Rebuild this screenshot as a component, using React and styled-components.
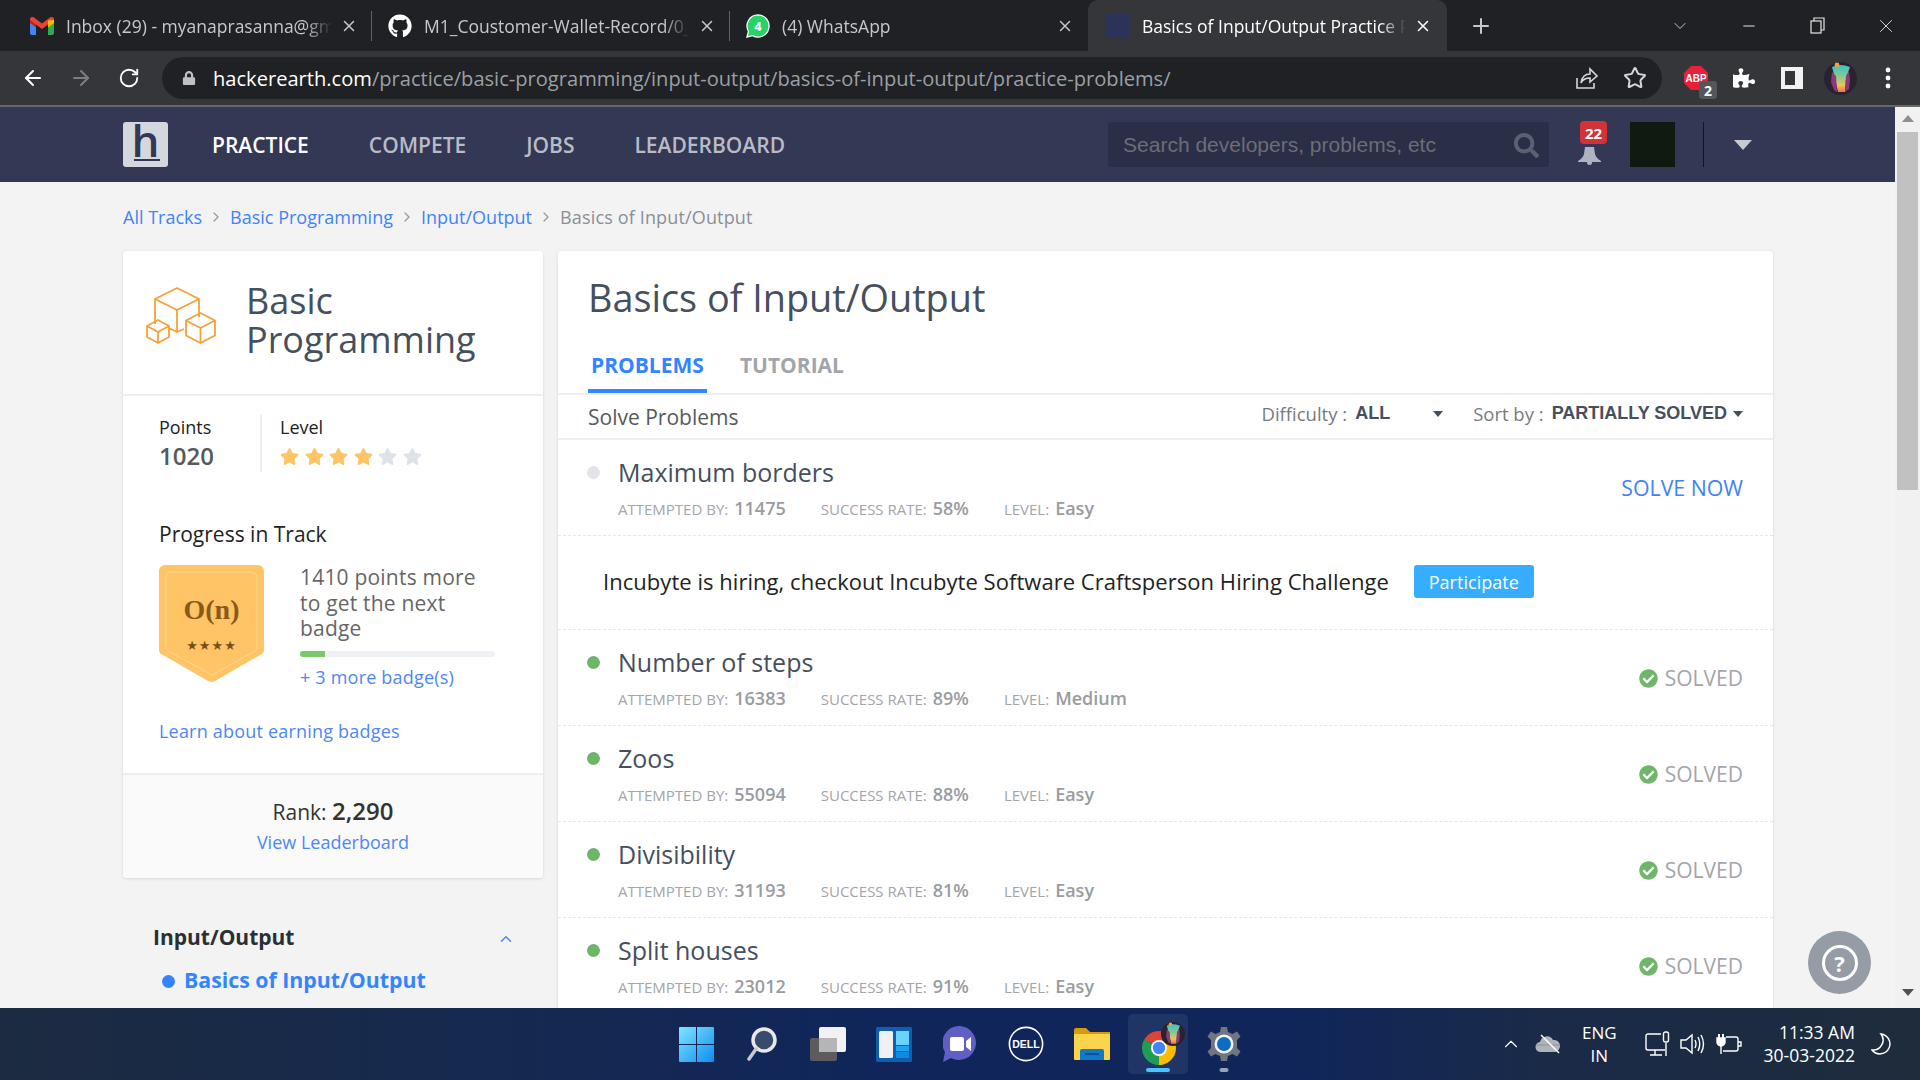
import React from 'react'
import styled, { createGlobalStyle } from 'styled-components'
import { FaGithub, FaSearch, FaStar, FaCheckCircle, FaPuzzlePiece, FaLock } from 'react-icons/fa'
import { ArrowLeft, ArrowRight, RotateCw, Star, X, Plus, ChevronDown, ChevronUp, ChevronRight, Minus } from 'lucide-react'

const GlobalStyle = createGlobalStyle`
  html, body {
    margin: 0;
    padding: 0;
    background: #f3f3f3;
    overflow: hidden;
  }
  * { box-sizing: border-box; }
`

const Screen = styled.div`
  width: 1920px;
  height: 1080px;
  display: flex;
  flex-direction: column;
  overflow: hidden;
  font-family: "Open Sans", "Liberation Sans", sans-serif;
`

/* ---------- browser chrome ---------- */

const TabStrip = styled.div`
  height: 51px;
  flex: none;
  display: flex;
  background: #202124;
  padding-left: 18px;
`

const Tab = styled.div`
  position: relative;
  flex: none;
  width: ${p => (p.$active ? '359px' : '358px')};
  margin-left: ${p => (p.$active ? '-4px' : '0')};
  padding-left: ${p => (p.$active ? '18px' : '12px')};
  padding-right: ${p => (p.$active ? '15px' : '18px')};
  display: flex;
  align-items: center;
  background: ${p => (p.$active ? '#35363a' : 'transparent')};
  border-radius: ${p => (p.$active ? '10px 10px 0 0' : '0')};
  color: ${p => (p.$active ? '#ffffff' : '#c5c8cc')};
  font-size: 17.5px;

  &::after {
    content: '';
    display: ${p => (p.$sep ? 'block' : 'none')};
    position: absolute;
    right: 4px;
    top: 11px;
    height: 30px;
    width: 1px;
    background: #5f6368;
  }
`

const TabIcon = styled.span`
  flex: none;
  width: ${p => p.$w || 24}px;
  height: 24px;
  display: flex;
  align-items: center;
  justify-content: center;
  color: #fff;
`

const TabTitle = styled.span`
  flex: 1;
  margin-left: 12px;
  white-space: nowrap;
  overflow: hidden;
  -webkit-mask-image: linear-gradient(to right, #000 90%, transparent 100%);
  mask-image: linear-gradient(to right, #000 90%, transparent 100%);
`

const TabClose = styled(X)`
  flex: none;
  margin-left: 8px;
  color: ${p => (p.$active ? '#fff' : '#c5c8cc')};
`

const NewTab = styled.div`
  margin-left: 20px;
  width: 28px;
  display: flex;
  align-items: center;
  justify-content: center;
  color: #c5c8cc;
`

const WindowButtons = styled.div`
  margin-left: auto;
  display: flex;
`

const WindowButton = styled.div`
  width: 68.5px;
  display: flex;
  align-items: center;
  justify-content: center;
  color: #e4e5e6;
`

const Toolbar = styled.div`
  height: 54px;
  flex: none;
  display: flex;
  align-items: center;
  background: #35363a;
  padding-left: 14px;
`

const ToolButton = styled.div`
  flex: none;
  width: ${p => p.$w || 48}px;
  display: flex;
  align-items: center;
  justify-content: center;
  color: ${p => p.$color || '#ffffff'};
  position: relative;
`

const UrlBar = styled.div`
  flex: none;
  width: 1500px;
  height: 42px;
  margin-left: 14px;
  border-radius: 21px;
  background: #202124;
  display: flex;
  align-items: center;
  padding: 0 15px 0 20px;
  font-size: 20.1px;
  color: #9aa0a6;
  white-space: nowrap;
`

const UrlHost = styled.span`
  color: #ffffff;
`

const UrlText = styled.div`
  flex: 1;
  margin-left: 17px;
`

const UrlAction = styled.span`
  display: flex;
  margin-left: 24px;
  color: #d5d6d8;
`

const ExtSlot = styled(ToolButton)`
  margin-left: 10px;
`

const ExtBadge = styled.span`
  position: absolute;
  right: 3px;
  bottom: -9px;
  width: 18px;
  height: 18px;
  border-radius: 3px;
  background: #55565a;
  color: #fff;
  font-size: 14px;
  font-weight: 700;
  display: flex;
  align-items: center;
  justify-content: center;
`

const ChromeEdge = styled.div`
  height: 2px;
  flex: none;
  background: #66676a;
`

/* ---------- site nav ---------- */

const Middle = styled.div`
  flex: 1;
  min-height: 0;
  display: flex;
`

const PageColumn = styled.div`
  flex: 1;
  min-width: 0;
  display: flex;
  flex-direction: column;
  overflow: hidden;
`

const SiteNav = styled.div`
  height: 75px;
  flex: none;
  background: #333855;
  display: flex;
  align-items: center;
  padding-left: 123px;
`

const Logo = styled.div`
  position: relative;
  flex: none;
  width: 45px;
  height: 45px;
  background: #d5d7de;
  border-radius: 3px;
  color: #333855;
  font-size: 44px;
  font-weight: 600;
  line-height: 36px;
  text-align: center;

  &::after {
    content: '';
    position: absolute;
    left: 11px;
    right: 8px;
    bottom: 6px;
    height: 2px;
    background: #333855;
  }
`

const NavLinks = styled.div`
  display: flex;
  margin-left: 44px;
  gap: 60px;
`

const NavLink = styled.a`
  font-size: 21px;
  font-weight: 600;
  color: ${p => (p.$active ? '#ffffff' : '#b9bbc6')};
`

const SearchBox = styled.div`
  margin-left: 323px;
  width: 441px;
  height: 45px;
  flex: none;
  background: #2a2e47;
  border-radius: 3px;
  display: flex;
  align-items: center;
  justify-content: space-between;
  padding: 1px 10px 0 15px;
  font-family: "Liberation Sans", sans-serif;
  font-size: 21px;
  color: #6c6d76;
`

const BellWrap = styled.div`
  position: relative;
  flex: none;
  margin-left: 29px;
  width: 23px;
  height: 18px;
  margin-top: 23px;
`

const BellCount = styled.span`
  position: absolute;
  left: 2px;
  top: -26px;
  width: 27px;
  height: 23px;
  border-radius: 4px;
  background: #d23338;
  color: #fff;
  font-size: 15px;
  font-weight: 700;
  display: flex;
  align-items: center;
  justify-content: center;
`

const Avatar = styled.div`
  flex: none;
  width: 45px;
  height: 45px;
  margin-left: 29px;
  background: #111a10;
`

const NavDivider = styled.div`
  flex: none;
  width: 1px;
  height: 45px;
  margin-left: 28px;
  background: #14151c;
`

const NavCaret = styled.div`
  flex: none;
  margin-left: 30px;
  width: 0;
  height: 0;
  border-left: 9px solid transparent;
  border-right: 9px solid transparent;
  border-top: 10px solid #c9cad1;
`

/* ---------- page ---------- */

const Page = styled.div`
  flex: 1;
  min-height: 0;
  overflow: hidden;
  background: #f3f3f3;
  padding: 0 124px 0 123px;
`

const Crumbs = styled.div`
  height: 69px;
  display: flex;
  align-items: center;
  font-size: 18px;
`

const Crumb = styled.a`
  color: ${p => (p.$current ? '#8a8f98' : '#3f83f8')};
  letter-spacing: ${p => (p.$current ? '0.15px' : '0')};
`

const CrumbSep = styled(ChevronRight)`
  margin: 0 6px;
  color: #9b9b9b;
`

const Columns = styled.div`
  display: flex;
  gap: 15px;
  align-items: flex-start;
`

const Sidebar = styled.div`
  flex: none;
  width: 420px;
`

const Card = styled.div`
  background: #ffffff;
  border-radius: 4px;
  box-shadow: 0 1px 3px rgba(0, 0, 0, 0.12);
`

const TrackHead = styled.div`
  height: 145px;
  display: flex;
  align-items: center;
  padding: 0 0 6px 23px;
  gap: 30px;
  border-bottom: 2px solid #eeeeee;
`

const CubesSlot = styled.div`
  display: flex;
  flex: none;
  margin-bottom: 8px;
`

const TrackTitle = styled.div`
  font-size: 36px;
  line-height: 39px;
  color: #454f5e;
`

const Stats = styled.div`
  display: flex;
  padding: 19px 0 0 36px;
`

const Stat = styled.div`
  height: 57px;
  width: ${p => p.$w}px;
  padding-left: ${p => p.$pad || 0}px;
  border-left: ${p => (p.$line ? '2px solid #eeeeee' : 'none')};
`

const StatLabel = styled.div`
  font-size: 18px;
  line-height: 24px;
  color: #222222;
`

const StatValue = styled.div`
  margin-top: 1px;
  font-size: 24px;
  line-height: 32px;
  font-weight: 600;
  color: #555a60;
`

const Stars = styled.div`
  margin-top: 1px;
  height: 32px;
  display: flex;
  align-items: center;
  gap: 5.5px;
`

const ProgressBlock = styled.div`
  padding: 48px 36px 30px;
`

const ProgressTitle = styled.div`
  font-size: 21px;
  line-height: 28px;
  color: #222222;
`

const BadgeRow = styled.div`
  display: flex;
  gap: 36px;
  margin-top: 17px;
`

const BadgeInfo = styled.div`
  flex: none;
  width: 195px;
`

const BadgeText = styled.div`
  font-size: 21px;
  line-height: 25.6px;
  letter-spacing: 0.2px;
  color: #666666;
`

const Bar = styled.div`
  margin-top: 9px;
  height: 6px;
  border-radius: 3px;
  background: #f0f1f4;
  overflow: hidden;
`

const BarFill = styled.div`
  height: 100%;
  background: #7dc96a;
`

const BlueLink = styled.a`
  display: block;
  font-size: 18px;
  line-height: 24px;
  letter-spacing: 0.2px;
  color: #4d87f6;
`

const MoreBadges = styled(BlueLink)`
  margin-top: 8px;
`

const LearnLink = styled(BlueLink)`
  margin-top: 30px;
`

const RankLink = styled(BlueLink)`
  margin-top: 1px;
  letter-spacing: 0;
`

const RankFoot = styled.div`
  height: 105px;
  background: #fafafa;
  border-top: 2px solid #eeeeee;
  border-radius: 0 0 4px 4px;
  text-align: center;
  padding-top: 19px;
`

const RankLine = styled.div`
  font-size: 21px;
  line-height: 34px;
  color: #333333;

  b {
    font-size: 24px;
    font-weight: 600;
  }
`

const SideSection = styled.div`
  padding: 44px 30px 0;
`

const SideHead = styled.div`
  display: flex;
  align-items: center;
  justify-content: space-between;
  font-size: 21px;
  line-height: 30px;
  font-weight: 700;
  color: #2a2f36;
`

const SideChevron = styled(ChevronUp)`
  color: #4d87f6;
  margin: 4px -2px 0 0;
`

const SideItem = styled.div`
  position: relative;
  margin-top: 13px;
  padding-left: 31px;
  font-size: 21.3px;
  line-height: 30px;
  font-weight: 700;
  color: #3385ff;

  &::before {
    content: '';
    position: absolute;
    left: 9px;
    top: 10px;
    width: 13px;
    height: 13px;
    border-radius: 50%;
    background: #3385ff;
  }
`

const MainCard = styled(Card)`
  flex: none;
  width: 1215px;
`

const MainTitle = styled.h1`
  margin: 0;
  padding: 23px 0 0 30px;
  font-size: 37.8px;
  line-height: 48px;
  font-weight: 500;
  color: #454f5e;
`

const Tabs = styled.div`
  display: flex;
  gap: 30px;
  padding: 29px 0 0 30px;
  border-bottom: 2px solid #eeeeee;
`

const TabLink = styled.a`
  font-size: 21px;
  line-height: 28px;
  font-weight: 700;
  padding: 0 3px 10px;
  color: ${p => (p.$active ? '#3385ff' : '#a2a5aa')};
  border-bottom: 4px solid ${p => (p.$active ? '#3385ff' : 'transparent')};
`

const FilterBar = styled.div`
  height: 45px;
  display: flex;
  align-items: center;
  padding: 0 30px;
  border-bottom: 2px solid #eeeeee;
`

const SolveTitle = styled.div`
  font-size: 21px;
  color: #555a60;
  margin-right: auto;
`

const Filter = styled.div`
  display: flex;
  align-items: center;
  margin-left: ${p => p.$ml || 0}px;
  padding-bottom: 6px;
  font-size: 18.5px;
  color: #777b80;
  white-space: nowrap;

  b {
    margin-left: 8px;
    font-family: "Liberation Sans", sans-serif;
    font-size: 18px;
    font-weight: 700;
    color: #454f5e;
  }
`

const Caret = styled.span`
  width: 0;
  height: 0;
  margin-left: ${p => p.$ml}px;
  border-left: 5.5px solid transparent;
  border-right: 5.5px solid transparent;
  border-top: 6px solid #454f5e;
`

const ProblemItem = styled.div`
  height: 96px;
  border-bottom: 1px dashed #e6e6e6;
  display: flex;
  justify-content: space-between;
  padding: 16px 30px 0 29px;
`

const ProblemMain = styled.div`
  display: flex;
  gap: 18px;
`

const StatusDot = styled.span`
  flex: none;
  width: 13px;
  height: 13px;
  margin-top: 10px;
  border-radius: 50%;
  background: ${p => (p.$done ? '#6fb56a' : '#e3e4e8')};
`

const ProblemName = styled.div`
  font-size: 25px;
  line-height: 32px;
  font-weight: 500;
  color: #454f5e;
`

const MetaRow = styled.div`
  display: flex;
  gap: 35px;
  margin-top: 8px;
  line-height: 24px;
`

const Meta = styled.span`
  font-size: 15px;
  color: #a2a5aa;
  white-space: nowrap;

  b {
    margin-left: 6px;
    font-size: 18px;
    font-weight: 600;
    color: #999ca1;
  }
`

const SolveNow = styled.a`
  margin-top: 16px;
  line-height: 32px;
  font-size: 21.3px;
  color: #3f83f8;
`

const Solved = styled.div`
  margin-top: 16px;
  display: flex;
  align-items: center;
  height: 32px;
  gap: 7px;
  font-size: 21px;
  color: #a2a5aa;
`

const HiringRow = styled.div`
  height: 94px;
  border-bottom: 1px dashed #e6e6e6;
  display: flex;
  align-items: center;
  padding: 0 0 4px 45px;
  gap: 25px;
  font-size: 22px;
  font-weight: 500;
  letter-spacing: 0.04px;
  color: #222222;
`

const Participate = styled.a`
  flex: none;
  width: 120px;
  height: 33px;
  margin-top: 2px;
  border-radius: 3px;
  background: #36adff;
  color: #fff;
  font-size: 18px;
  font-weight: 400;
  display: flex;
  align-items: center;
  justify-content: center;
`

const HelpButton = styled.div`
  position: absolute;
  left: 1808px;
  top: 931px;
  width: 63px;
  height: 63px;
  border-radius: 50%;
  background: #959ca5;
  display: flex;
  align-items: center;
  justify-content: center;

  span {
    width: 36px;
    height: 36px;
    border-radius: 50%;
    border: 3px solid #fff;
    color: #fff;
    font-size: 22px;
    font-weight: 700;
    display: flex;
    align-items: center;
    justify-content: center;
  }
`

/* ---------- scrollbar ---------- */

const ScrollTrack = styled.div`
  flex: none;
  width: 25px;
  background: #f1f1f1;
  display: flex;
  flex-direction: column;
  align-items: center;
`

const ScrollArrow = styled.span`
  flex: none;
  width: 0;
  height: 0;
  margin-top: ${p => p.$mt || 0}px;
  border-left: 6px solid transparent;
  border-right: 6px solid transparent;
  ${p => (p.$up ? 'border-bottom: 7px solid #8f8f8f;' : 'border-top: 7px solid #505050;')}
`

const ScrollThumb = styled.div`
  flex: none;
  width: 21px;
  height: 358px;
  margin-top: 10px;
  background: #c1c1c1;
`

/* ---------- taskbar ---------- */

const Taskbar = styled.div`
  height: 72px;
  flex: none;
  display: flex;
  align-items: center;
  padding-left: 663px;
  background: linear-gradient(to right, #1c2b40 0%, #16294f 25%, #10265a 45%, #10265a 68%, #1a2a48 80%, #1f2c3c 100%);
  color: #ffffff;
`

const TaskIcons = styled.div`
  display: flex;
  height: 100%;
  align-items: center;
`

const TaskCell = styled.div`
  position: relative;
  width: ${p => (p.$active ? '60px' : '66px')};
  margin: ${p => (p.$active ? '0 3px' : '0')};
  height: 60px;
  display: flex;
  align-items: center;
  justify-content: center;
  border-radius: 5px;
  background: ${p => (p.$active ? 'rgba(255, 255, 255, 0.07)' : 'transparent')};

  &::after {
    content: '';
    display: ${p => (p.$run ? 'block' : 'none')};
    position: absolute;
    bottom: 2px;
    left: 50%;
    transform: translateX(-50%);
    width: ${p => (p.$active ? '24px' : '9px')};
    height: 4px;
    border-radius: 2px;
    background: ${p => (p.$active ? '#4cc2ff' : '#9aa3b5')};
  }
`

const ChromeStack = styled.div`
  position: relative;
  width: 43px;
  height: 44px;
  margin-left: 11px;
`

const ChromeBall = styled.div`
  position: absolute;
  left: 0;
  top: 9px;
  display: flex;
`

const ChromeAvatar = styled.div`
  position: absolute;
  right: 0;
  top: 0;
  display: flex;
`

const Tray = styled.div`
  display: flex;
  align-items: center;
  margin-left: 243px;
`

const TrayIcon = styled.div`
  flex: none;
  display: flex;
  margin-left: ${p => p.$ml || 0}px;
  color: #fff;
`

const TrayText = styled.div`
  flex: none;
  margin-left: ${p => p.$ml || 0}px;
  font-size: ${p => p.$size || 17}px;
  line-height: 23px;
  text-align: ${p => p.$align || 'center'};
  white-space: nowrap;
`

/* ---------- drawings ---------- */

const GmailIcon = () => (
  <svg width="24" height="18" viewBox="0 0 24 18">
    <path d="M0 3 V16 A2 2 0 0 0 2 18 H6 V7Z" fill="#4285f4" />
    <path d="M18 7 V18 H22 A2 2 0 0 0 24 16 V3Z" fill="#34a853" />
    <path d="M0 3 L12 12 L24 3 A2.5 2.5 0 0 0 20 .5 L12 6.5 L4 .5 A2.5 2.5 0 0 0 0 3Z" fill="#ea4335" />
    <path d="M18 3.5 L24 3 V6 L18 10.5Z" fill="#fbbc04" />
    <path d="M0 3 L6 7.5 V10.5 L0 6Z" fill="#c5221f" />
  </svg>
)

const WhatsAppIcon = () => (
  <svg width="26" height="26" viewBox="0 0 26 26">
    <path d="M13 1 A12 12 0 1 1 7 23.4 L1 25 L2.7 19 A12 12 0 0 1 13 1Z" fill="#25d366" stroke="#fff" strokeWidth="1.4" />
    <text x="13" y="18" textAnchor="middle" fontFamily="Open Sans" fontWeight="700" fontSize="14" fill="#fff">4</text>
  </svg>
)

const ShareIcon = () => (
  <svg width="24" height="24" viewBox="0 0 24 24" fill="none" stroke="currentColor" strokeWidth="1.6">
    <path d="M2 12 V22 H19 V17" />
    <path d="M6 17 C7 10 11 8 15 8 V3 L22 10 L15 16 V12 C11 12 8 13 6 17Z" />
  </svg>
)

const AbpIcon = () => (
  <svg width="24" height="24" viewBox="0 0 24 24">
    <path d="M7 0 H17 L24 7 V17 L17 24 H7 L0 17 V7Z" fill="#e8203a" />
    <text x="12" y="16" textAnchor="middle" fontFamily="Liberation Sans" fontWeight="700" fontSize="10" fill="#fff">ABP</text>
  </svg>
)

const PanelIcon = () => (
  <svg width="22" height="22" viewBox="0 0 22 22">
    <path d="M0 0 H22 V22 H0Z M4 4 V18 H14 V4Z" fill="#f2f2f2" fillRule="evenodd" />
  </svg>
)

const ProfileIcon = ({ size = 33, id }) => (
  <svg width={size} height={size} viewBox="0 0 33 33">
    <defs>
      <linearGradient id={id} x1="0" y1="0" x2="0" y2="1">
        <stop offset="0" stopColor="#37c6c4" />
        <stop offset="0.45" stopColor="#8fc98a" />
        <stop offset="0.75" stopColor="#f2c25a" />
        <stop offset="1" stopColor="#e8793f" />
      </linearGradient>
    </defs>
    <circle cx="16.5" cy="16.5" r="16.5" fill="#2a2230" />
    <path d="M8 5 Q16 1 26 5 L22 16 L21 30 H14 L11 16Z" fill={`url(#${id})`} />
    <path d="M8 10 L12 14 L13 30 L10 28 L7 20Z M25 9 L22 14 L21 30 L25 27 L26 18Z" fill="#8a3a7a" />
    <circle cx="13" cy="3" r="2.4" fill="#f2a23a" />
  </svg>
)

const CubesIcon = () => (
  <svg width="70" height="58" viewBox="0 0 70 58" fill="none" stroke="#f7a035" strokeWidth="1.8" strokeLinejoin="round">
    <path d="M9 37 V12 L31 1 L53 12 V30" />
    <path d="M9 12 L31 23 L53 12" />
    <path d="M31 23 V45 L38 42" />
    <path d="M12 33 L23 39 V50 L12 56 L1 50 V39Z M1 39 L12 45 L23 39 M12 45 V56 M23 41 L31 45" />
    <path d="M54.5 26 L69 33.5 V48.5 L54.5 56 L40 48.5 V33.5Z M40 33.5 L54.5 41 L69 33.5 M54.5 41 V56" />
  </svg>
)

const BellIcon = () => (
  <svg width="23" height="18" viewBox="0 0 23 18" fill="#aeb4c0">
    <path d="M7 0 H16 L17 7 Q18 11 23 14 V15 H0 V14 Q5 11 6 7Z" />
    <circle cx="11.5" cy="15.5" r="2.5" />
  </svg>
)

const BadgeShield = () => (
  <svg width="105" height="118" viewBox="0 0 105 118" style={{ flex: 'none' }}>
    <path d="M6 0 H99 A6 6 0 0 1 105 6 V85 A6 6 0 0 1 101 90 L56 116 A8 8 0 0 1 49 116 L4 90 A6 6 0 0 1 0 85 V6 A6 6 0 0 1 6 0Z" fill="#ffc466" />
    <path d="M12 7 H93 A5 5 0 0 1 98 12 V82 A4 4 0 0 1 96 86 L53 110 L9 86 A4 4 0 0 1 7 82 V12 A5 5 0 0 1 12 7Z" fill="none" stroke="#ffd793" strokeWidth="1" />
    <text x="52.5" y="54" textAnchor="middle" fontFamily="Liberation Serif" fontWeight="700" fontSize="28" fill="#8a5a18">O(n)</text>
    <text x="52.5" y="85" textAnchor="middle" fontFamily="DejaVu Sans" fontSize="13" letterSpacing="1" fill="#7a4f14">★★★★</text>
  </svg>
)

const StartIcon = () => (
  <svg width="35" height="35" viewBox="0 0 35 35">
    <defs>
      <linearGradient id="win" x1="0" y1="0" x2="1" y2="1">
        <stop offset="0" stopColor="#7fe6ff" />
        <stop offset="1" stopColor="#0f8cf0" />
      </linearGradient>
    </defs>
    <path d="M1 0 H17 V17 H0 V1 A1 1 0 0 1 1 0Z M18 0 H34 A1 1 0 0 1 35 1 V17 H18Z M0 18 H17 V35 H1 A1 1 0 0 1 0 34Z M18 18 H35 V34 A1 1 0 0 1 34 35 H18Z" fill="url(#win)" />
  </svg>
)

const SearchTaskIcon = () => (
  <svg width="30" height="34" viewBox="0 0 30 34">
    <circle cx="17" cy="13" r="11" fill="#3a4a6b" stroke="#e8e8ec" strokeWidth="3.5" />
    <path d="M9 22 L2 32" stroke="#c9c9cf" strokeWidth="3.5" strokeLinecap="round" />
  </svg>
)

const TaskViewIcon = () => (
  <svg width="36" height="34" viewBox="0 0 36 34">
    <rect x="0" y="11" width="27" height="23" rx="2" fill="#5c5c5e" />
    <rect x="9" y="0" width="27" height="25" rx="2" fill="#f2f2f2" />
    <rect x="9" y="11" width="18" height="14" fill="#b5b5b7" />
  </svg>
)

const WidgetsIcon = () => (
  <svg width="36" height="35" viewBox="0 0 36 35">
    <rect width="36" height="35" rx="1.5" fill="#0f5fb0" />
    <rect x="3" y="4" width="14" height="27" rx="1.5" fill="#f0f0f2" />
    <rect x="20" y="4" width="13" height="14" fill="#69d4ff" />
    <rect x="20" y="19" width="13" height="5" fill="#1ea5f5" />
    <rect x="20" y="25" width="13" height="6" fill="#0d8be0" />
  </svg>
)

const ChatIcon = () => (
  <svg width="34" height="36" viewBox="0 0 34 36">
    <path d="M17 0 A17 17 0 1 1 8 32 L0 36 L2 26 A17 17 0 0 1 17 0Z" fill="#5f5fc4" />
    <rect x="7" y="11" width="14" height="14" rx="2" fill="#fff" />
    <path d="M23 15 L28 11 V25 L23 21Z" fill="#fff" />
  </svg>
)

const DellIcon = () => (
  <svg width="36" height="36" viewBox="0 0 36 36">
    <circle cx="18" cy="18" r="16.6" fill="none" stroke="#fff" strokeWidth="1.6" />
    <text x="18" y="22" textAnchor="middle" fontFamily="Liberation Sans" fontWeight="700" fontSize="10.5" fill="#fff">DELL</text>
  </svg>
)

const FolderIcon = () => (
  <svg width="36" height="32" viewBox="0 0 36 32">
    <path d="M0 2 A2 2 0 0 1 2 0 H12 L16 4 H36 V8 H0Z" fill="#d79a09" />
    <path d="M0 6 H36 V31 A1 1 0 0 1 35 32 H1 A1 1 0 0 1 0 31Z" fill="#fcd34d" />
    <path d="M6 32 V23 A2 2 0 0 1 8 21 H28 A2 2 0 0 1 30 23 V32Z" fill="#1278c8" />
    <rect x="11" y="25" width="14" height="2" fill="#0b4f8f" />
  </svg>
)

const ChromeTaskIcon = () => (
  <ChromeStack>
    <ChromeBall>
      <svg width="34" height="34" viewBox="0 0 34 34">
        <path d="M17 17 L2.3 8.5 A17 17 0 0 1 31.7 8.5Z" fill="#db4437" />
        <path d="M17 17 L31.7 8.5 A17 17 0 0 1 17 34Z" fill="#fbbc04" />
        <path d="M17 17 L17 34 A17 17 0 0 1 2.3 8.5Z" fill="#1f9d55" />
        <circle cx="17" cy="17" r="8" fill="#fff" />
        <circle cx="17" cy="17" r="6.2" fill="#4285f4" />
      </svg>
    </ChromeBall>
    <ChromeAvatar><ProfileIcon size={24} id="profileTask" /></ChromeAvatar>
  </ChromeStack>
)

const GearIcon = () => (
  <svg width="36" height="36" viewBox="0 0 36 36">
    <path d="M15 1 H21 L22 6 L26.5 8 L31 5.5 L34.5 10.5 L31 14 V22 L34.5 25.5 L31 30.5 L26.5 28 L22 30 L21 35 H15 L14 30 L9.5 28 L5 30.5 L1.5 25.5 L5 22 V14 L1.5 10.5 L5 5.5 L9.5 8 L14 6Z" fill="#6f7680" />
    <circle cx="18" cy="18" r="9.5" fill="#f0f2f5" />
    <circle cx="18" cy="18" r="7" fill="#0f6cc2" />
  </svg>
)

const CloudOffIcon = () => (
  <svg width="26" height="20" viewBox="0 0 26 20">
    <path d="M6 18 A5 5 0 0 1 5 8 A7 7 0 0 1 18 6 A6 6 0 0 1 20 18Z" fill="#aeb4ba" />
    <path d="M1 11 H25" stroke="#8b9197" strokeWidth="1" />
    <path d="M6 1 L24 19" stroke="#fff" strokeWidth="1.4" />
  </svg>
)

const MonitorIcon = () => (
  <svg width="26" height="26" viewBox="0 0 26 26" fill="none" stroke="#fff" strokeWidth="1.4">
    <path d="M16 3 H3 A2 2 0 0 0 1 5 V17 A2 2 0 0 0 3 19 H20" />
    <path d="M10 19 V24 M5 24 H17 M21 12 V25" />
    <rect x="18.5" y="1" width="5" height="10" rx="2" />
  </svg>
)

const SpeakerIcon = () => (
  <svg width="26" height="24" viewBox="0 0 26 24" fill="none" stroke="#fff" strokeWidth="1.4">
    <path d="M1 8 H6 L12 3 V21 L6 16 H1Z" />
    <path d="M15 8 Q17 12 15 16 M18 5 Q21.5 12 18 19 M21 3 Q26 12 21 21" />
  </svg>
)

const BatteryIcon = () => (
  <svg width="26" height="22" viewBox="0 0 26 22" fill="none" stroke="#fff" strokeWidth="1.4">
    <path d="M10 4 H20 A2 2 0 0 1 22 6 V16 A2 2 0 0 1 20 18 H7" />
    <path d="M22 9 H25 V13 H22" />
    <path d="M3 1 V5 M7 1 V5" strokeWidth="2" />
    <path d="M1 5 H9 V9 A4 4 0 0 1 1 9Z" fill="#fff" />
    <path d="M5 13 V21" />
  </svg>
)

const MoonIcon = () => (
  <svg width="20" height="22" viewBox="0 0 20 22" fill="none" stroke="#fff" strokeWidth="1.5">
    <path d="M10 1 A10 10 0 0 1 1 17 A10 10 0 0 0 18 15 A10 10 0 0 0 10 1Z" />
  </svg>
)

const problems = [
  { name: 'Number of steps', by: 16383, rate: '89%', level: 'Medium' },
  { name: 'Zoos', by: 55094, rate: '88%', level: 'Easy' },
  { name: 'Divisibility', by: 31193, rate: '81%', level: 'Easy' },
  { name: 'Split houses', by: 23012, rate: '91%', level: 'Easy' }
]

function ProblemInfo({ done, name, by, rate, level }) {
  return (
    <ProblemMain>
      <StatusDot $done={done} />
      <div>
        <ProblemName>{name}</ProblemName>
        <MetaRow>
          <Meta>ATTEMPTED BY:<b>{by}</b></Meta>
          <Meta>SUCCESS RATE:<b>{rate}</b></Meta>
          <Meta>LEVEL:<b>{level}</b></Meta>
        </MetaRow>
      </div>
    </ProblemMain>
  )
}

export default function App() {
  return (
    <Screen>
      <GlobalStyle />

      <TabStrip>
        <Tab $sep>
          <TabIcon><GmailIcon /></TabIcon>
          <TabTitle>Inbox (29) - myanaprasanna@gmail.com</TabTitle>
          <TabClose size={18} />
        </Tab>
        <Tab $sep>
          <TabIcon><FaGithub size={24} /></TabIcon>
          <TabTitle>M1_Coustomer-Wallet-Record/0_Coustomer</TabTitle>
          <TabClose size={18} />
        </Tab>
        <Tab>
          <TabIcon><WhatsAppIcon /></TabIcon>
          <TabTitle>(4) WhatsApp</TabTitle>
          <TabClose size={18} />
        </Tab>
        <Tab $active>
          <TabIcon><svg width="24" height="24"><rect width="24" height="24" rx="2" fill="#2b3358" /></svg></TabIcon>
          <TabTitle>Basics of Input/Output Practice Problems</TabTitle>
          <TabClose size={18} $active />
        </Tab>
        <NewTab><Plus size={24} /></NewTab>
        <WindowButtons>
          <WindowButton><ChevronDown size={20} strokeWidth={1} /></WindowButton>
          <WindowButton><Minus size={18} strokeWidth={1.4} /></WindowButton>
          <WindowButton>
            <svg width="15" height="17" viewBox="0 0 15 17" fill="none" stroke="currentColor" strokeWidth="1.2">
              <rect x="1" y="4" width="10" height="12" />
              <path d="M4 4 V1 H14 V13 H11" />
            </svg>
          </WindowButton>
          <WindowButton><X size={22} strokeWidth={1} /></WindowButton>
        </WindowButtons>
      </TabStrip>

      <Toolbar>
        <ToolButton $w={38}><ArrowLeft size={24} /></ToolButton>
        <ToolButton $w={58} $color="#7d7e81"><ArrowRight size={24} /></ToolButton>
        <ToolButton $w={38}><RotateCw size={22} /></ToolButton>
        <UrlBar>
          <FaLock size={14} color="#bdc1c6" />
          <UrlText><UrlHost>hackerearth.com</UrlHost>/practice/basic-programming/input-output/basics-of-input-output/practice-problems/</UrlText>
          <UrlAction><ShareIcon /></UrlAction>
          <UrlAction><Star size={24} strokeWidth={2} /></UrlAction>
        </UrlBar>
        <ExtSlot>
          <AbpIcon />
          <ExtBadge>2</ExtBadge>
        </ExtSlot>
        <ToolButton><FaPuzzlePiece size={22} /></ToolButton>
        <ToolButton><PanelIcon /></ToolButton>
        <ToolButton><ProfileIcon id="profileTop" /></ToolButton>
        <ToolButton>
          <svg width="6" height="22" viewBox="0 0 6 22" fill="#fff">
            <circle cx="3" cy="3" r="2.4" />
            <circle cx="3" cy="11" r="2.4" />
            <circle cx="3" cy="19" r="2.4" />
          </svg>
        </ToolButton>
      </Toolbar>
      <ChromeEdge />

      <Middle>
        <PageColumn>
          <SiteNav>
            <Logo>h</Logo>
            <NavLinks>
              <NavLink $active>PRACTICE</NavLink>
              <NavLink>COMPETE</NavLink>
              <NavLink>JOBS</NavLink>
              <NavLink>LEADERBOARD</NavLink>
            </NavLinks>
            <SearchBox>
              Search developers, problems, etc
              <FaSearch size={25} color="#5b6072" />
            </SearchBox>
            <BellWrap>
              <BellIcon />
              <BellCount>22</BellCount>
            </BellWrap>
            <Avatar />
            <NavDivider />
            <NavCaret />
          </SiteNav>

          <Page>
            <Crumbs>
              <Crumb>All Tracks</Crumb>
              <CrumbSep size={16} />
              <Crumb>Basic Programming</Crumb>
              <CrumbSep size={16} />
              <Crumb>Input/Output</Crumb>
              <CrumbSep size={16} />
              <Crumb $current>Basics of Input/Output</Crumb>
            </Crumbs>

            <Columns>
              <Sidebar>
                <Card>
                  <TrackHead>
                    <CubesSlot><CubesIcon /></CubesSlot>
                    <TrackTitle>Basic<br />Programming</TrackTitle>
                  </TrackHead>
                  <Stats>
                    <Stat $w={101}>
                      <StatLabel>Points</StatLabel>
                      <StatValue>1020</StatValue>
                    </Stat>
                    <Stat $w={200} $line $pad={18}>
                      <StatLabel>Level</StatLabel>
                      <Stars>
                        {[1, 2, 3, 4, 5, 6].map(n => (
                          <FaStar key={n} size={19} color={n <= 4 ? '#ffc466' : '#dfe2e8'} />
                        ))}
                      </Stars>
                    </Stat>
                  </Stats>
                  <ProgressBlock>
                    <ProgressTitle>Progress in Track</ProgressTitle>
                    <BadgeRow>
                      <BadgeShield />
                      <BadgeInfo>
                        <BadgeText>1410 points more to get the next badge</BadgeText>
                        <Bar><BarFill style={{ width: '13%' }} /></Bar>
                        <MoreBadges>+ 3 more badge(s)</MoreBadges>
                      </BadgeInfo>
                    </BadgeRow>
                    <LearnLink>Learn about earning badges</LearnLink>
                  </ProgressBlock>
                  <RankFoot>
                    <RankLine>Rank: <b>2,290</b></RankLine>
                    <RankLink>View Leaderboard</RankLink>
                  </RankFoot>
                </Card>
                <SideSection>
                  <SideHead>
                    Input/Output
                    <SideChevron size={18} />
                  </SideHead>
                  <SideItem>Basics of Input/Output</SideItem>
                </SideSection>
              </Sidebar>

              <MainCard>
                <MainTitle>Basics of Input/Output</MainTitle>
                <Tabs>
                  <TabLink $active>PROBLEMS</TabLink>
                  <TabLink>TUTORIAL</TabLink>
                </Tabs>
                <FilterBar>
                  <SolveTitle>Solve Problems</SolveTitle>
                  <Filter>Difficulty :<b>ALL</b><Caret $ml={43} /></Filter>
                  <Filter $ml={30}>Sort by :<b>PARTIALLY SOLVED</b><Caret $ml={6} /></Filter>
                </FilterBar>
                <ProblemItem>
                  <ProblemInfo name="Maximum borders" by={11475} rate="58%" level="Easy" />
                  <SolveNow>SOLVE NOW</SolveNow>
                </ProblemItem>
                <HiringRow>
                  Incubyte is hiring, checkout Incubyte Software Craftsperson Hiring Challenge
                  <Participate>Participate</Participate>
                </HiringRow>
                {problems.map(p => (
                  <ProblemItem key={p.name}>
                    <ProblemInfo done {...p} />
                    <Solved>
                      <FaCheckCircle size={19} color="#6fb56a" />
                      SOLVED
                    </Solved>
                  </ProblemItem>
                ))}
              </MainCard>
            </Columns>
          </Page>
        </PageColumn>

        <ScrollTrack>
          <ScrollArrow $up $mt={8} />
          <ScrollThumb />
          <ScrollArrow $mt={499} />
        </ScrollTrack>
      </Middle>

      <HelpButton><span>?</span></HelpButton>

      <Taskbar>
        <TaskIcons>
          <TaskCell><StartIcon /></TaskCell>
          <TaskCell><SearchTaskIcon /></TaskCell>
          <TaskCell><TaskViewIcon /></TaskCell>
          <TaskCell><WidgetsIcon /></TaskCell>
          <TaskCell><ChatIcon /></TaskCell>
          <TaskCell><DellIcon /></TaskCell>
          <TaskCell><FolderIcon /></TaskCell>
          <TaskCell $active $run><ChromeTaskIcon /></TaskCell>
          <TaskCell $run><GearIcon /></TaskCell>
        </TaskIcons>
        <Tray>
          <TrayIcon><ChevronUp size={22} strokeWidth={1.2} /></TrayIcon>
          <TrayIcon $ml={13}><CloudOffIcon /></TrayIcon>
          <TrayText $ml={21}>ENG<br />IN</TrayText>
          <TrayIcon $ml={28}><MonitorIcon /></TrayIcon>
          <TrayIcon $ml={9}><SpeakerIcon /></TrayIcon>
          <TrayIcon $ml={10}><BatteryIcon /></TrayIcon>
          <TrayText $ml={22} $size={17.5} $align="right">11:33 AM<br />30-03-2022</TrayText>
          <TrayIcon $ml={16}><MoonIcon /></TrayIcon>
        </Tray>
      </Taskbar>
    </Screen>
  )
}
